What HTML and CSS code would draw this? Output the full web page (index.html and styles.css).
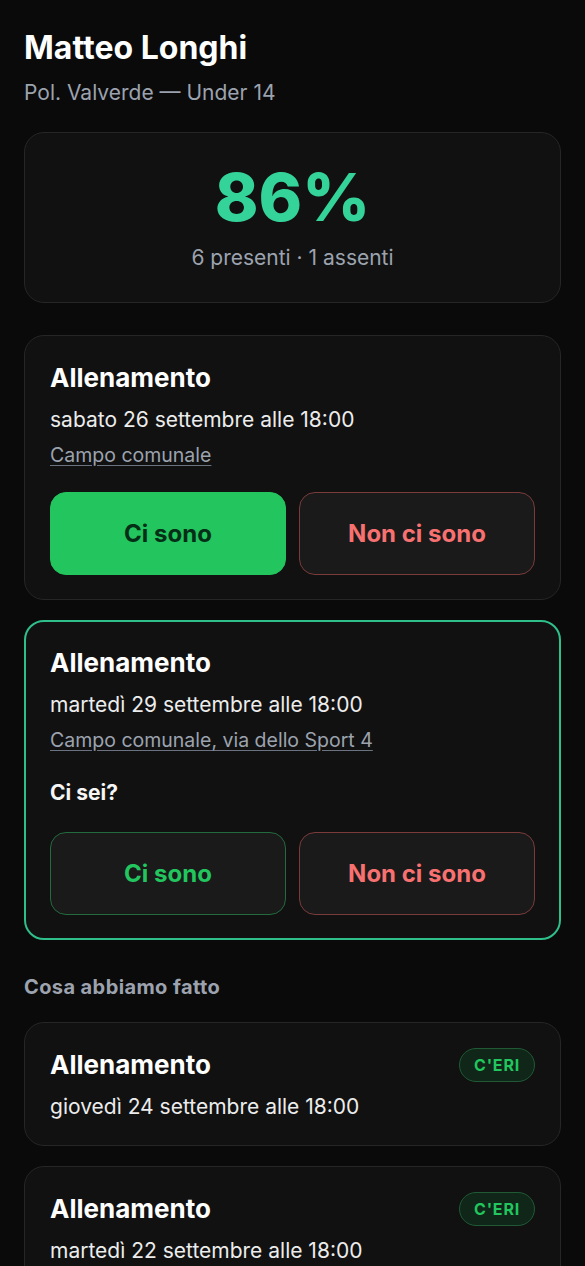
FILE: index.html
```html
<!DOCTYPE html>
<html lang="it">

<head>
    <meta charset="UTF-8">
    <meta name="viewport" content="width=device-width, initial-scale=1.0">
    <title>Matteo Longhi</title>
    <link rel="stylesheet" href="styles.css">
</head>

<body>
    <div class="page">
        <header class="player">
            <h1>Matteo Longhi</h1>
            <p class="team">Pol. Valverde — Under 14</p>
        </header>

        <div class="card stats">
            <div class="percent">86%</div>
            <div class="counts">6 presenti · 1 assenti</div>
        </div>

        <div class="events">
            <div class="card event">
                <h2>Allenamento</h2>
                <p class="when">sabato 26 settembre alle 18:00</p>
                <p class="where"><a href="#">Campo comunale</a></p>
                <div class="answers">
                    <button class="btn yes active">Ci sono</button>
                    <button class="btn no">Non ci sono</button>
                </div>
            </div>

            <div class="card event pending">
                <h2>Allenamento</h2>
                <p class="when">martedì 29 settembre alle 18:00</p>
                <p class="where"><a href="#">Campo comunale, via dello Sport 4</a></p>
                <p class="ask">Ci sei?</p>
                <div class="answers">
                    <button class="btn yes">Ci sono</button>
                    <button class="btn no">Non ci sono</button>
                </div>
            </div>
        </div>

        <h3 class="section-title">Cosa abbiamo fatto</h3>

        <div class="events">
            <div class="card event past">
                <div class="past-head">
                    <h2>Allenamento</h2>
                    <span class="badge">C'ERI</span>
                </div>
                <p class="when">giovedì 24 settembre alle 18:00</p>
            </div>

            <div class="card event past">
                <div class="past-head">
                    <h2>Allenamento</h2>
                    <span class="badge">C'ERI</span>
                </div>
                <p class="when">martedì 22 settembre alle 18:00</p>
            </div>
        </div>
    </div>
</body>

</html>
```

FILE: styles.css
```css
* {
    margin: 0;
    padding: 0;
    box-sizing: border-box;
}

body {
    font-family: 'Inter', 'Noto Sans', sans-serif;
    background: #0a0a0a;
    color: #f5f5f5;
}

.page {
    padding: 28px 24px 40px;
}

.player h1 {
    font-size: 32px;
    font-weight: 700;
    line-height: 40px;
    color: #fff;
}

.team {
    margin-top: 11px;
    font-size: 21px;
    line-height: 28px;
    color: #9ca3af;
}

.card {
    background: #111111;
    border: 1px solid #262626;
    border-radius: 20px;
}

.stats {
    margin-top: 25px;
    padding: 26px 20px 30px;
    text-align: center;
}

.percent {
    font-size: 66px;
    font-weight: 800;
    line-height: 76px;
    color: #34d399;
}

.counts {
    margin-top: 9px;
    font-size: 21px;
    line-height: 28px;
    color: #9ca3af;
}

.events {
    display: flex;
    flex-direction: column;
    gap: 20px;
    margin-top: 32px;
}

.event {
    padding: 25px 25px 24px;
}

.event.pending {
    border: 2px solid #2fbf8a;
    padding: 24px 24px 23px;
}

.event h2 {
    font-size: 26px;
    font-weight: 700;
    line-height: 34px;
    color: #fff;
}

.when {
    margin-top: 11px;
    font-size: 21px;
    line-height: 28px;
    color: #ececec;
}

.where {
    margin-top: 8px;
    font-size: 19.5px;
    line-height: 26px;
}

.where a {
    color: #9ca3af;
    text-decoration: underline;
    text-decoration-color: #6b7280;
    text-underline-offset: 3px;
}

.ask {
    margin-top: 26px;
    font-size: 21px;
    font-weight: 700;
    line-height: 28px;
    color: #f5f5f5;
}

.answers {
    display: grid;
    grid-template-columns: 1fr 1fr;
    gap: 13px;
    margin-top: 24px;
}

.ask + .answers {
    margin-top: 25px;
}

.btn {
    height: 83px;
    border-radius: 16px;
    font-family: inherit;
    font-size: 24px;
    font-weight: 700;
    background: #1a1a1a;
    cursor: pointer;
}

.btn.yes {
    border: 1px solid #236b3e;
    color: #22c55e;
}

.btn.yes.active {
    background: #22c55e;
    border-color: #22c55e;
    color: #052e16;
}

.btn.no {
    border: 1px solid #7a3b3b;
    color: #f87171;
}

.section-title {
    margin-top: 35px;
    font-size: 20px;
    font-weight: 700;
    line-height: 24px;
    letter-spacing: 0.4px;
    color: #9ca3af;
}

.section-title + .events {
    margin-top: 23px;
}

.past-head {
    display: flex;
    align-items: center;
    justify-content: space-between;
}

.badge {
    padding: 0 14px;
    line-height: 32px;
    border: 1px solid #1f5a35;
    border-radius: 999px;
    background: #0f2618;
    color: #22c55e;
    font-size: 16px;
    font-weight: 700;
    letter-spacing: 0.8px;
}
```
